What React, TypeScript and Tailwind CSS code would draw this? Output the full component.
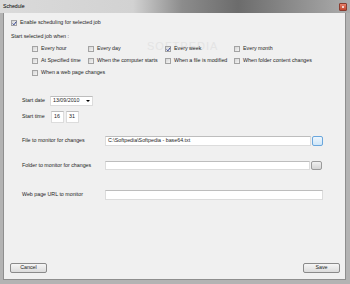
import type { ReactNode } from 'react';

function CheckBox({ checked = false }: { checked?: boolean }) {
  return (
    <span className="relative flex h-[6px] w-[6px] shrink-0 items-center justify-center border border-[#a3a3a3] bg-gradient-to-br from-[#d6d6d6] to-[#f4f4f4]">
      {checked && (
        <svg viewBox="0 0 6 6" className="absolute left-0 top-0 h-[5px] w-[5px]">
          <path d="M0.8 3 L2.3 4.6 L5.2 0.8" stroke="#2d3f8f" strokeWidth="1.2" fill="none" />
        </svg>
      )}
    </span>
  );
}

function Option({ label, checked }: { label: string; checked?: boolean }) {
  return (
    <div className="flex h-[12px] items-center gap-[3px]">
      <CheckBox checked={checked} />
      <span className="whitespace-nowrap">{label}</span>
    </div>
  );
}

function TextBox({ value, className }: { value?: string; className: string }) {
  return (
    <div
      className={`flex items-center border border-[#dcdcdc] border-t-[#bdbdbd] bg-white pl-[2px] whitespace-nowrap ${className}`}
    >
      {value}
    </div>
  );
}

function Browse({ active = false }: { active?: boolean }) {
  return (
    <div
      className={
        active
          ? 'h-[10px] w-[11px] rounded-[2px] border border-[#6aa6dc] bg-gradient-to-b from-[#eef6fd] to-[#cfe6f8]'
          : 'h-[9px] w-[11px] rounded-[2px] border border-[#9a9a9a] bg-gradient-to-b from-[#f0f0f0] to-[#d4d4d4]'
      }
    />
  );
}

function FieldRow({ label, children, className }: { label: string; children: ReactNode; className: string }) {
  return (
    <div className={`flex items-center pl-[18px] ${className}`}>
      <span className="w-[83px] shrink-0 whitespace-nowrap">{label}</span>
      {children}
    </div>
  );
}

function PushButton({ label }: { label: string }) {
  return (
    <div className="flex h-[10px] w-[37px] items-center justify-center rounded-[2px] border border-[#8a8a8a] bg-gradient-to-b from-[#f6f6f6] to-[#dcdcdc]">
      {label}
    </div>
  );
}

export default function App() {
  return (
    <div className="flex h-[284px] w-[350px] flex-col bg-[#b3b3b3] font-['Liberation_Sans',Arial,sans-serif] text-[5.3px] text-[#1e1e1e]">
      <div className="flex h-[13px] shrink-0 items-center justify-between bg-[linear-gradient(90deg,#dadada_0%,#d2d2d2_38%,#8c8c8c_52%,#6c6c6c_68%,#8e8e8e_85%,#acacac_100%)] pl-[3px] pr-[3px]">
        <span className="text-[5.2px] text-black">Schedule</span>
        <div className="flex h-[8px] w-[8px] items-center justify-center rounded-[1px] border border-[#8a3b2e] bg-gradient-to-b from-[#e6816c] to-[#c0432c]">
          <span className="h-[2px] w-[2px] bg-[#f3d3cc]" />
        </div>
      </div>
      <div className="flex flex-1 pb-[4px] pl-[3px] pr-[4px]">
        <div className="relative flex flex-1 flex-col border-x border-b border-[#8e8e8e] bg-[#f0f0f0]">
          <span className="pointer-events-none absolute left-[143px] top-[25px] text-[11px] tracking-[1px] text-[#e4e4e4]">
            SOFTPEDIA
          </span>

          <div className="relative mt-[6px] flex h-[8px] items-center gap-[3px] pl-[7px]">
            <CheckBox checked />
            <span>Enable scheduling for selected job</span>
          </div>

          <div className="relative mt-[6px] flex h-[8px] items-center pl-[7px]">Start selected job when :</div>

          <div className="relative ml-[28px] mt-[2px] grid grid-cols-[56px_77px_69px_1fr]">
            <Option label="Every hour" />
            <Option label="Every day" />
            <Option label="Every week" checked />
            <Option label="Every month" />
            <Option label="At Specified time" />
            <Option label="When the computer starts" />
            <Option label="When a file is modified" />
            <Option label="When folder content changes" />
            <Option label="When a web page changes" />
          </div>

          <div className="mt-[17px] flex h-[10px] items-center pl-[18px]">
            <span className="w-[28px] shrink-0">Start date</span>
            <div className="flex h-[10px] w-[43px] items-center justify-between border border-[#dcdcdc] border-t-[#bdbdbd] bg-white pl-[2px] pr-[2px]">
              <span>13/09/2010</span>
              <span className="h-0 w-0 border-x-[2px] border-t-[2px] border-x-transparent border-t-black" />
            </div>
          </div>

          <div className="mt-[5px] flex h-[12px] items-center pl-[18px]">
            <span className="w-[29px] shrink-0">Start time</span>
            <TextBox value="16" className="h-[12px] w-[13px]" />
            <TextBox value="31" className="ml-[2px] h-[12px] w-[13px]" />
          </div>

          <FieldRow label="File to monitor for changes" className="mt-[13px] h-[10px]">
            <TextBox value="C:\Softpedia\Softpedia - base64.txt" className="h-[10px] w-[206px]" />
            <div className="ml-[1px]">
              <Browse active />
            </div>
          </FieldRow>

          <FieldRow label="Folder to monitor for changes" className="mt-[15px] h-[9px]">
            <TextBox className="h-[9px] w-[205px]" />
            <div className="ml-[1px]">
              <Browse />
            </div>
          </FieldRow>

          <FieldRow label="Web page URL to monitor" className="mt-[20px] h-[10px]">
            <TextBox className="h-[10px] w-[218px]" />
          </FieldRow>

          <div className="flex-1" />

          <div className="flex items-center justify-between pb-[6px] pl-[6px] pr-[5px]">
            <PushButton label="Cancel" />
            <PushButton label="Save" />
          </div>
        </div>
      </div>
    </div>
  );
}
